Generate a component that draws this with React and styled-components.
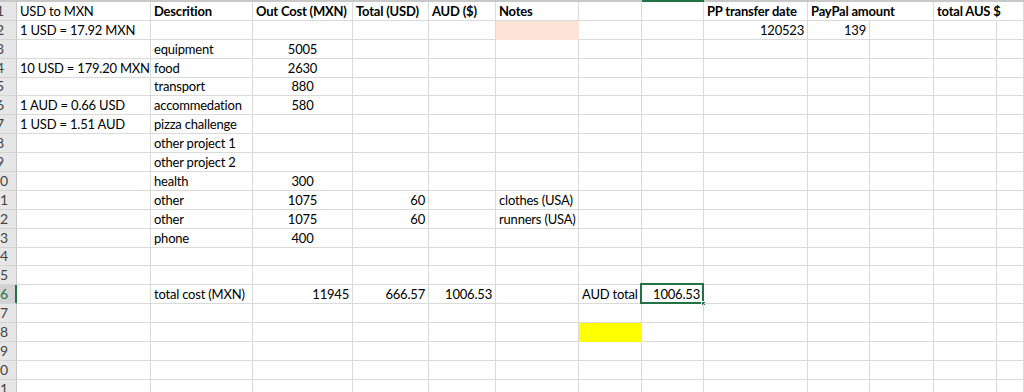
import React from "react";
import styled, { createGlobalStyle, css } from "styled-components";

const Global = createGlobalStyle`
  html, body { margin: 0; padding: 0; background: #fff; }
  body {
    width: 1024px; height: 392px; overflow: hidden;
    font-family: Lato, "Liberation Sans", sans-serif;
    font-size: 13px; color: #000;
  }
`;

const COLS = "17px 134px 102px 100px 76px 67px 83px 63px 62px 104px 62px 64px 63px 1fr";
const GRID = "#dadada";
const GREEN = "#217346";

const Page = styled.div`
  display: flex;
  flex-direction: column;
  width: 1024px;
  height: 392px;
  overflow: hidden;
`;

const HeaderEdge = styled.div`
  display: grid;
  grid-template-columns: ${COLS};
  height: 2px;
  flex: none;
`;

const EdgeSeg = styled.div`
  background: ${(p) => (p.$active ? GREEN : "#c8c8c8")};
`;

const Sheet = styled.div`
  display: grid;
  grid-template-columns: ${COLS};
  grid-auto-rows: 18.9px;
`;

const RowHead = styled.div`
  box-sizing: border-box;
  overflow: hidden;
  background: ${(p) => (p.$active ? "#d2d2d2" : "#e6e6e6")};
  border-right: 1px solid ${(p) => (p.$active ? GREEN : "#c6c6c6")};
  border-bottom: 1px solid #d4d4d4;
  display: flex;
  align-items: flex-end;
  color: ${(p) => (p.$active ? GREEN : "#444")};
  font-size: 14px;
  ${(p) => p.$active && css`box-shadow: inset -1px 0 0 ${GREEN};`}
`;

const RowNum = styled.span`
  flex: none;
  width: 32px;
  margin-left: -16px;
  text-align: center;
  line-height: 16px;
  padding-bottom: 1px;
`;

const justify = { left: "flex-start", center: "center", right: "flex-end" };

const Cell = styled.div`
  box-sizing: border-box;
  position: relative;
  min-width: 0;
  background: ${(p) => p.$bg || "transparent"};
  border-right: 1px solid ${(p) => (p.$noRight ? "transparent" : p.$bg || GRID)};
  border-bottom: 1px solid ${(p) => p.$bg || GRID};
  display: flex;
  align-items: flex-end;
  justify-content: ${(p) => justify[p.$align || "left"]};
  padding: 0 3px 1px 3px;
  white-space: nowrap;
  line-height: 16px;
  letter-spacing: -0.2px;
  font-weight: ${(p) => (p.$bold ? 700 : 400)};
`;

const Selection = styled.div`
  position: absolute;
  left: -2px;
  top: -2px;
  right: -1px;
  bottom: -1px;
  border: 2px solid ${GREEN};
  pointer-events: none;
  &::after {
    content: "";
    position: absolute;
    right: -4px;
    bottom: -4px;
    width: 5px;
    height: 5px;
    background: ${GREEN};
    border: 1px solid #fff;
    box-sizing: border-box;
  }
`;

const LETTERS = ["A", "B", "C", "D", "E", "F", "G", "H", "I", "J", "K", "L", "M"];

const B = (t) => ({ t, bold: true });
const R = (t) => ({ t, align: "right" });
const C = (t) => ({ t, align: "center" });
const L = (t) => ({ t });

const rows = {
  1: {
    A: L("USD to MXN"),
    B: B("Descrition"),
    C: B("Out Cost (MXN)"),
    D: B("Total (USD)"),
    E: B("AUD ($)"),
    F: B("Notes"),
    I: B("PP transfer date"),
    J: { t: "PayPal amount", bold: true, noRight: true },
    L: { t: "total AUS $", bold: true, noRight: true },
  },
  2: {
    A: L("1 USD = 17.92 MXN"),
    F: { t: "", bg: "#fce4d6" },
    I: R("120523"),
    J: R("139"),
  },
  3: { B: L("equipment"), C: C("5005") },
  4: { A: L("10 USD = 179.20 MXN"), B: L("food"), C: C("2630") },
  5: { B: L("transport"), C: C("880") },
  6: { A: L("1 AUD = 0.66 USD"), B: L("accommedation"), C: C("580") },
  7: { A: L("1 USD = 1.51 AUD"), B: L("pizza challenge") },
  8: { B: L("other project 1") },
  9: { B: L("other project 2") },
  10: { B: L("health"), C: C("300") },
  11: { B: L("other"), C: C("1075"), D: R("60"), F: L("clothes (USA)") },
  12: { B: L("other"), C: C("1075"), D: R("60"), F: L("runners (USA)") },
  13: { B: L("phone"), C: C("400") },
  16: {
    B: L("total cost (MXN)"),
    C: R("11945"),
    D: R("666.57"),
    E: R("1006.53"),
    G: L("AUD total"),
    H: { t: "1006.53", align: "right", selected: true },
  },
  18: { G: { t: "", bg: "#ffff00" } },
};

const ACTIVE_ROW = 16;
const ACTIVE_COL = "H";

export default function App() {
  const rowNums = Array.from({ length: 21 }, (_, i) => i + 1);
  return (
    <Page>
      <Global />
      <HeaderEdge>
        <EdgeSeg />
        {LETTERS.map((l) => (
          <EdgeSeg key={l} $active={l === ACTIVE_COL} />
        ))}
      </HeaderEdge>
      <Sheet>
        {rowNums.map((n) => (
          <React.Fragment key={n}>
            <RowHead $active={n === ACTIVE_ROW}>
              <RowNum>{n}</RowNum>
            </RowHead>
            {LETTERS.map((l) => {
              const c = (rows[n] && rows[n][l]) || {};
              return (
                <Cell
                  key={l}
                  $align={c.align}
                  $bold={c.bold}
                  $bg={c.bg}
                  $noRight={c.noRight}
                >
                  {c.t}
                  {c.selected && <Selection />}
                </Cell>
              );
            })}
          </React.Fragment>
        ))}
      </Sheet>
    </Page>
  );
}
